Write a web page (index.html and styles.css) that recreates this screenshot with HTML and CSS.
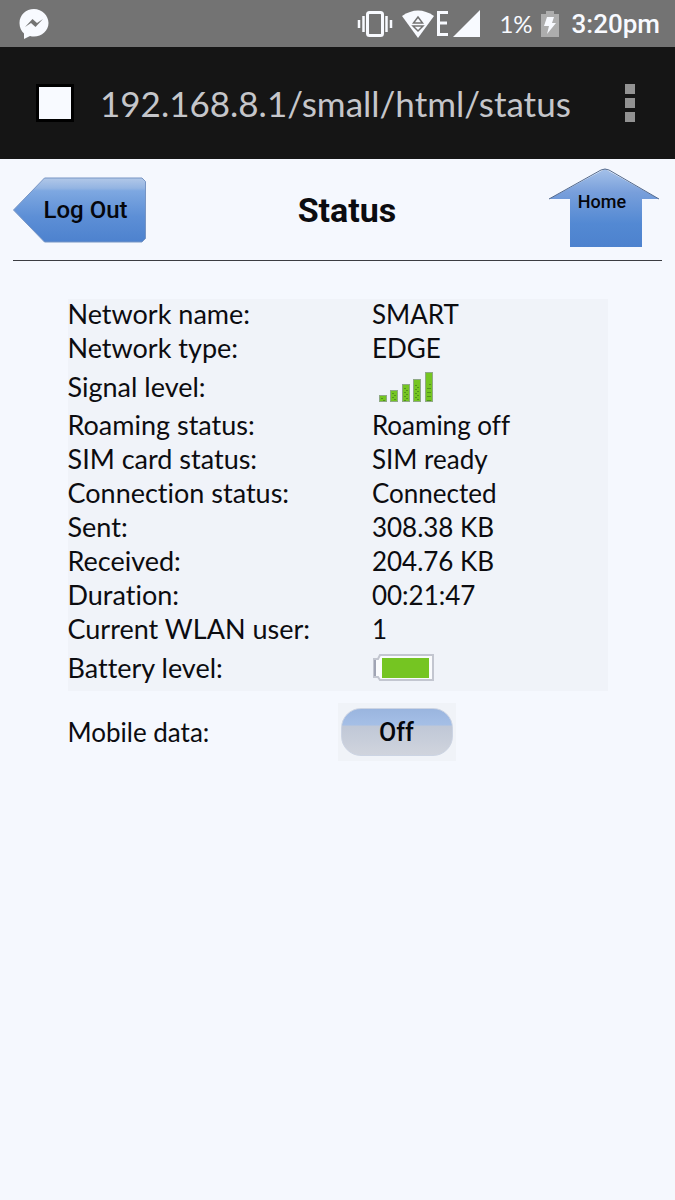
FILE: index.html
```html
<!DOCTYPE html>
<html lang="en">
<head>
  <meta charset="UTF-8">
  <meta name="viewport" content="width=device-width, initial-scale=1.0">
  <title>Status</title>
  <link rel="stylesheet" href="styles.css">
</head>
<body>
  <div class="status-bar">
    <svg class="messenger-icon" width="30" height="30" viewBox="0 0 30 30">
      <path fill="#f8faff" d="M15 0C7 0 .5 6 .5 14c0 4.500 1.800 8 4.500 10.500V30l6-3c1.300.4 2.600.5 4 .5 8 0 14.500-6 14.500-13.500S23 0 15 0z"/>
      <path fill="#737373" d="M6 18l7.500-8 4.500 4 6-4-7.500 8-4.500-4z"/>
    </svg>
    <div class="status-icons">
      <svg width="36" height="28" viewBox="0 0 36 28">
        <rect x="10.500" y="2.500" width="15" height="23" rx="2" fill="none" stroke="#f8faff" stroke-width="3"/>
        <path d="M6.500 6v16M2 10v8M29.500 6v16M34 10v8" stroke="#f8faff" stroke-width="2.500"/>
      </svg>
      <svg class="wifi-icon" width="34" height="28" viewBox="0 0 34 28">
        <path fill="#f8faff" d="M1 6Q17-5 33 6L17 28z"/>
        <path fill="none" stroke="#737373" stroke-width="1.500" d="M12.500 13L17 7l4.500 6zM12 16h10l-5 5z"/>
      </svg>
      <svg width="14" height="28" viewBox="0 0 14 28">
        <path d="M13 2.500H3.500v22H13M3 13h9" fill="none" stroke="#f8faff" stroke-width="3"/>
      </svg>
      <svg class="cell-icon" width="28" height="28" viewBox="0 0 28 28">
        <path fill="#f8faff" d="M27 0v27H0z"/>
      </svg>
      <span class="percent">1%</span>
      <svg class="charge-icon" width="18" height="28" viewBox="0 0 18 28">
        <path fill="#adadad" d="M5 1h8v3h5v23H0V4h5z"/>
        <path fill="#f8faff" d="M6 7h7l-2 6h4L6 24l2-8H3z"/>
      </svg>
      <span class="clock">3:20pm</span>
    </div>
  </div>

  <div class="address-bar">
    <span class="page-icon"></span>
    <input type="text" class="url" aria-label="Address" value="192.168.8.1/small/html/status">
    <button type="button" class="menu-button" aria-label="Menu">
      <span></span><span></span><span></span>
    </button>
  </div>

  <header class="page-header">
    <a href="#" class="logout">
      <svg class="shape" viewBox="0 0 133 66">
        <defs>
          <linearGradient id="logoutFill" x1="0" y1="0" x2="0" y2="1">
            <stop offset="0" stop-color="#b2c8e8"/>
            <stop offset="0.160" stop-color="#93b4e2"/>
            <stop offset="0.200" stop-color="#7ea8e1"/>
            <stop offset="0.600" stop-color="#5d8fd6"/>
            <stop offset="1" stop-color="#4d82ce"/>
          </linearGradient>
        </defs>
        <path fill="url(#logoutFill)" stroke="#7795c4" d="M.5 33L31.500 1H129l3.500 3.500v57L129 65H31.500z"/>
      </svg>
      <span>Log Out</span>
    </a>
    <h1>Status</h1>
    <a href="#" class="home">
      <svg class="shape" viewBox="0 0 112 80">
        <defs>
          <linearGradient id="homeFill" x1="0" y1="0" x2="0" y2="1">
            <stop offset="0" stop-color="#a5c1e9"/>
            <stop offset="0.300" stop-color="#789fdb"/>
            <stop offset="0.700" stop-color="#5389d3"/>
            <stop offset="1" stop-color="#4d82ce"/>
          </linearGradient>
        </defs>
        <path fill="url(#homeFill)" d="M57 1l54 30H94v48H22V31H1z"/>
        <path fill="none" stroke="#52698c" d="M1 31L53 2q4-2 8 0l50 29"/>
      </svg>
      <span>Home</span>
    </a>
  </header>

  <main>
    <table class="status-table">
      <tr><th scope="row">Network name:</th><td>SMART</td></tr>
      <tr><th scope="row">Network type:</th><td>EDGE</td></tr>
      <tr class="icon-row">
        <th scope="row">Signal level:</th>
        <td>
          <svg class="signal" width="56" height="32" viewBox="0 0 56 32" role="img" aria-label="Full signal">
            <g fill="#75c522" stroke="#8fa985">
              <rect x="1.500" y="24.500" width="7" height="6"/>
              <rect x="12.500" y="19.500" width="7" height="11"/>
              <rect x="24.500" y="13.500" width="7" height="17"/>
              <rect x="35.500" y="8.500" width="7" height="22"/>
              <rect x="47.500" y="1.500" width="7" height="29"/>
            </g>
            <g stroke="#2f6512" stroke-dasharray="1 3">
              <path d="M4 27v3M15 22v8M27 17v13M38 14v16M50 17v13"/>
              <path d="M6 29v1M17 24v6M29 19v11M40 16v14M52 13v17"/>
            </g>
          </svg>
        </td>
      </tr>
      <tr><th scope="row">Roaming status:</th><td>Roaming off</td></tr>
      <tr><th scope="row">SIM card status:</th><td>SIM ready</td></tr>
      <tr><th scope="row">Connection status:</th><td>Connected</td></tr>
      <tr><th scope="row">Sent:</th><td>308.38 KB</td></tr>
      <tr><th scope="row">Received:</th><td>204.76 KB</td></tr>
      <tr><th scope="row">Duration:</th><td>00:21:47</td></tr>
      <tr><th scope="row">Current WLAN user:</th><td>1</td></tr>
      <tr class="icon-row">
        <th scope="row">Battery level:</th>
        <td>
          <svg class="battery" width="62" height="28" viewBox="0 0 62 28" role="img" aria-label="Battery full">
            <path fill="#fafbfd" stroke="#c3c6d0" stroke-width="2" d="M8 1h53v25H8l-2-3H2V5h4z"/>
            <path stroke="#a0a4b4" stroke-width="2" d="M3 6v16"/>
            <rect x="10" y="4" width="47" height="20" fill="#75c522"/>
          </svg>
        </td>
      </tr>
    </table>

    <div class="data-row">
      <label for="mobileData">Mobile data:</label>
      <div class="switch">
        <button type="button" id="mobileData">Off</button>
      </div>
    </div>
  </main>
</body>
</html>
```
FILE: styles.css
```css
* {
  box-sizing: border-box;
  margin: 0;
  padding: 0;
}

body {
  min-height: 100vh;
  background: #f5f8fe;
  color: #0c0c10;
  font-family: Lato, sans-serif;
  font-size: 26px;
  font-variant-ligatures: none;
}

svg {
  display: block;
}

.status-bar {
  display: flex;
  align-items: center;
  justify-content: space-between;
  height: 47px;
  padding: 0 15px 0 19px;
  background: #737373;
  color: #f8faff;
}

.status-icons {
  display: flex;
  align-items: center;
}

.wifi-icon {
  margin-left: 8px;
}

.cell-icon {
  margin-left: 4px;
}

.percent {
  margin-left: 18px;
  font-size: 24px;
}

.charge-icon {
  margin: 0 13px 0 8px;
}

.clock {
  font-family: Roboto, sans-serif;
  font-size: 26px;
  font-weight: 500;
}

.address-bar {
  display: flex;
  align-items: center;
  height: 112px;
  padding: 0 32px 0 36px;
  background: #151515;
}

.page-icon {
  width: 38px;
  height: 38px;
  background: #f8faff;
  border: 3px solid #000;
}

.url {
  flex: 1;
  min-width: 0;
  margin: 0 20px 0 26px;
  border: none;
  outline: none;
  background: none;
  color: #c5c6ca;
  font-family: Lato, sans-serif;
  font-size: 35px;
}

.menu-button {
  display: flex;
  flex-direction: column;
  align-items: center;
  gap: 4px;
  width: 26px;
  border: none;
  background: none;
  cursor: pointer;
}

.menu-button span {
  width: 10px;
  height: 10px;
  background: #929292;
}

.page-header {
  display: flex;
  align-items: center;
  justify-content: space-between;
  height: 102px;
  margin: 0 13px;
  padding-right: 2px;
  border-bottom: 1px solid #3b3d42;
}

.page-header h1 {
  font-family: Roboto, sans-serif;
  font-size: 34px;
  font-weight: 700;
}

.logout,
.home {
  display: grid;
  align-items: center;
  justify-items: center;
  color: #05070c;
  font-family: Roboto, sans-serif;
  font-weight: 500;
  text-decoration: none;
}

.logout > *,
.home > * {
  grid-area: 1 / 1;
}

.shape {
  width: 100%;
}

.logout {
  width: 133px;
  font-size: 24px;
}

.logout span {
  padding-left: 12px;
}

.home {
  width: 112px;
  margin-bottom: 4px;
  font-size: 18px;
}

.home span {
  padding: 0 4px 12px 0;
}

main {
  width: 80%;
  margin: 38px auto 0;
}

.status-table {
  width: 100%;
  border-collapse: collapse;
  background: #f0f3f9;
}

.status-table tr {
  height: 34px;
}

.status-table .icon-row {
  height: 43px;
}

.status-table th {
  width: 56%;
  font-size: 27px;
  font-weight: 400;
  text-align: left;
}

.status-table th,
.status-table td {
  padding-bottom: 4px;
  line-height: 28px;
  vertical-align: middle;
  white-space: nowrap;
}

.status-table td {
  padding-left: 2px;
}

.signal {
  margin-left: 6px;
}

.data-row {
  display: grid;
  grid-template-columns: 1fr 1fr;
  align-items: center;
  margin-top: 12px;
}

.switch {
  justify-self: start;
  padding: 5px 3px;
  background: #f0f3f8;
}

.switch button {
  width: 112px;
  height: 48px;
  border: 1px solid #ccd4e3;
  border-radius: 20px;
  background: linear-gradient(#9ab5df, #a5bfe6 34%, #c0c8d7 38%, #d0d4dd);
  color: #05070c;
  font-family: Roboto, sans-serif;
  font-size: 25px;
  font-weight: 500;
  cursor: pointer;
}
```
